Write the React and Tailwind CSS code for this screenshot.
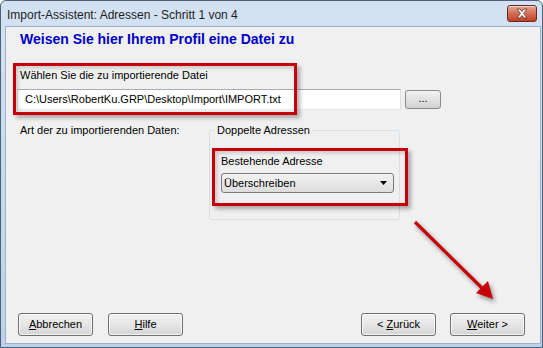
import React from 'react';

const WinButton = ({ children, className = '' }) => (
  <button
    className={`h-[23px] w-[75px] rounded-[3px] border border-[#707070] bg-gradient-to-b from-[#f2f2f2] via-[#e6e6e6] to-[#d4d4d4] text-[11px] text-black shadow-[inset_0_0_0_1px_rgba(255,255,255,0.7)] ${className}`}
  >
    {children}
  </button>
);

const Highlight = ({ className }) => (
  <div
    className={`absolute border-[3px] border-[#c8000a] shadow-[3px_3px_4px_rgba(0,0,0,0.3),inset_2px_2px_4px_rgba(0,0,0,0.18)] pointer-events-none ${className}`}
  />
);

export default function App() {
  return (
    <div
      className="relative w-[543px] h-[348px] flex flex-col bg-gradient-to-b from-[#d3e2f3] to-[#bcd2ea] border border-[#4f6074] rounded-t-[6px] overflow-hidden text-black"
      style={{ fontFamily: '"Liberation Sans", Arial, sans-serif' }}
    >
      {/* title bar */}
      <div className="h-[25px] flex items-start justify-between pl-[6px] pr-[5px]">
        <span className="pt-[6px] text-[12px] leading-[16px] text-[#1e1e1e]">
          Import-Assistent: Adressen - Schritt 1 von 4
        </span>
        <div className="mt-[4px] w-[30px] h-[17px] rounded-[3px] border border-[#6b2a20] bg-gradient-to-b from-[#e8a898] via-[#d26e58] to-[#c03c24] flex items-center justify-center shadow-[inset_0_1px_0_rgba(255,255,255,0.5)]">
          <svg width="14" height="11" viewBox="0 0 14 11">
            <path
              d="M2 1 L5 1 L7 3.5 L9 1 L12 1 L8.6 5.5 L12 10 L9 10 L7 7.5 L5 10 L2 10 L5.4 5.5 Z"
              fill="#ffffff"
              stroke="#5a2a22"
              strokeWidth="0.8"
            />
          </svg>
        </div>
      </div>

      {/* client area */}
      <div className="flex-1 ml-[4px] mr-[1px] mb-[3px] bg-[#f0f0f0] border border-[#9fb4ca] flex flex-col">
        <h1 className="pl-[14px] mt-[4px] text-[14px] leading-[16px] font-bold text-[#0000c8]">
          Weisen Sie hier Ihrem Profil eine Datei zu
        </h1>

        <div className="pl-[14px] mt-[21px] text-[11px] leading-[14px]">
          Wählen Sie die zu importierende Datei
        </div>
        <div className="flex items-center mt-[7px] pl-[11px]">
          <div className="w-[384px] h-[21px] bg-white border border-[#abadb3] border-l-[#dbdfe6] border-r-[#dbdfe6] border-b-[#e3e9ef] pl-[7px] flex items-center text-[11px]">
            C:\Users\RobertKu.GRP\Desktop\Import\IMPORT.txt
          </div>
          <button className="ml-[4px] w-[36px] h-[19px] rounded-[3px] border border-[#8a8a8a] bg-gradient-to-b from-[#f2f2f2] to-[#d2d2d2] text-[11px] leading-[10px] pb-[4px]">
            ...
          </button>
        </div>

        <div className="flex items-start mt-[13px] pl-[14px]">
          <div className="w-[189px] text-[11px] leading-[14px]">Art der zu importierenden Daten:</div>
          <fieldset className="w-[191px] border border-[#d5dfe5] rounded-[3px] pl-[11px] pr-[5px] pb-[26px]">
            <legend className="-ml-[6px] px-[2px] text-[11px] leading-[14px]">Doppelte Adressen</legend>
            <div className="mt-[17px] text-[11px] leading-[14px]">Bestehende Adresse</div>
            <div className="mt-[5px] h-[20px] rounded-[3px] border border-[#7a7a7a] bg-gradient-to-b from-[#f4f4f4] to-[#dcdcdc] flex items-center justify-between pl-[2px] pr-[6px] text-[11px]">
              <span>Überschreiben</span>
              <svg width="7" height="4" viewBox="0 0 7 4">
                <path d="M0 0 L7 0 L3.5 4 Z" fill="#000" />
              </svg>
            </div>
          </fieldset>
        </div>

        <div className="mt-auto mb-[7px] flex items-center pl-[12px] pr-[15px]">
          <WinButton>
            <span className="underline underline-offset-[1px]">A</span>bbrechen
          </WinButton>
          <WinButton className="ml-[15px]">
            <span className="underline underline-offset-[1px]">H</span>ilfe
          </WinButton>
          <div className="ml-auto flex gap-[14px]">
            <WinButton>
              &lt; <span className="underline underline-offset-[1px]">Z</span>urück
            </WinButton>
            <WinButton>
              <span className="underline underline-offset-[1px]">W</span>eiter &gt;
            </WinButton>
          </div>
        </div>
      </div>

      {/* annotations */}
      <Highlight className="left-[12px] top-[62px] w-[284px] h-[52px]" />
      <Highlight className="left-[211px] top-[147px] w-[196px] h-[58px]" />
      <svg
        className="absolute left-[399px] top-[209px] drop-shadow-[2px_3px_2px_rgba(0,0,0,0.4)]"
        width="110"
        height="100"
        viewBox="0 0 110 100"
      >
        <line x1="15" y1="12" x2="84" y2="80" stroke="#c8000a" strokeWidth="3.2" />
        <polygon points="93,89 76,83 88,71" fill="#c8000a" />
      </svg>
    </div>
  );
}
